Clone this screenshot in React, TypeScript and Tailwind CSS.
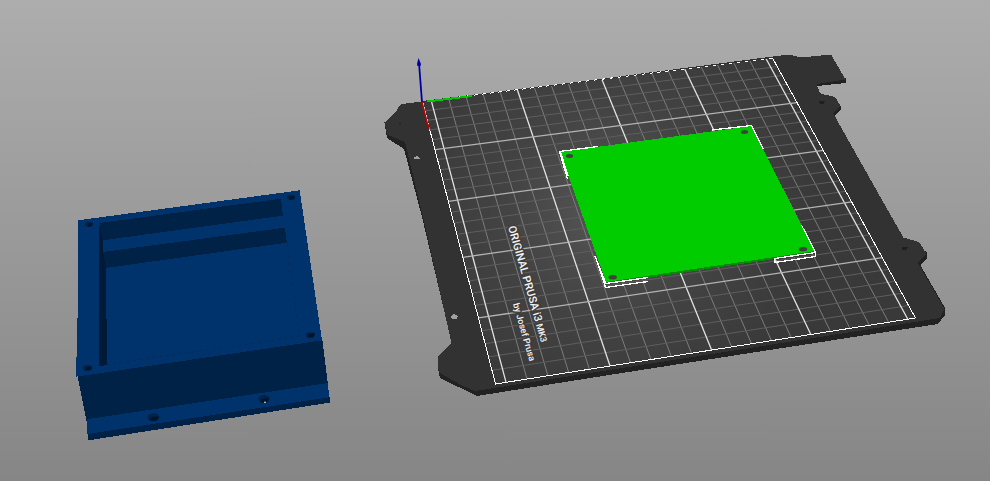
import React from 'react';

type Point = [number, number];

// Screen corners of the printable area, clockwise from the bed origin.
const corners: Point[] = [
  [422.5, 101.5],
  [772.5, 58],
  [915.5, 318],
  [495.5, 384],
];

const BED_DEPTH = 250;
const BED_WIDTH = 209;

// Projects bed millimetres to screen units; u runs right, v runs to the front.
function project(across: number, down: number): Point {
  const u = across / BED_WIDTH;
  const v = down / BED_DEPTH;
  const [[x0, y0], [x1, y1], [x2, y2], [x3, y3]] = corners;
  const dx1 = x1 - x2;
  const dx2 = x3 - x2;
  const dx3 = x0 - x1 + x2 - x3;
  const dy1 = y1 - y2;
  const dy2 = y3 - y2;
  const dy3 = y0 - y1 + y2 - y3;
  const det = dx1 * dy2 - dx2 * dy1;
  const g = (dx3 * dy2 - dx2 * dy3) / det;
  const h = (dx1 * dy3 - dx3 * dy1) / det;
  const w = g * u + h * v + 1;
  return [
    ((x1 - x0 + g * x1) * u + (x3 - x0 + h * x3) * v + x0) / w,
    ((y1 - y0 + g * y1) * u + (y3 - y0 + h * y3) * v + y0) / w,
  ];
}

function Grid() {
  const minor: React.ReactNode[] = [];
  const major: React.ReactNode[] = [];
  const add = (key: string, a: Point, b: Point, isMajor: boolean, bright: boolean) => {
    (isMajor ? major : minor).push(
      <line
        key={key}
        x1={a[0]}
        y1={a[1]}
        x2={b[0]}
        y2={b[1]}
        stroke={isMajor ? (bright ? '#e2e2e2' : '#b4b4b4') : bright ? '#7c7c7c' : '#5e5e5e'}
        strokeWidth={isMajor ? 1.3 : 1}
      />,
    );
  };
  for (let y = 5; y <= 205; y += 10) {
    add(`y${y}`, project(y, 0), project(y, BED_DEPTH), (y - 5) % 50 === 0, true);
  }
  for (let x = 10; x < BED_DEPTH; x += 10) {
    add(`x${x}`, project(0, x), project(BED_WIDTH, x), x % 50 === 0, false);
  }
  return (
    <g>
      {minor}
      {major}
    </g>
  );
}

function PrintBed() {
  return (
    <g>
      <g shapeRendering="crispEdges">
        {/* underside */}
        <path
          fill="#222222"
          d="M384.500 123 L387 138 L404 149 L422 217 L452 344 L438 368 L440 378 L477 396 L590 378 L750 353 L938 324 L945 315 L945 308 L918 261 L920 266 L927 258 L927 252 L903 239 L882 202 L833 113 L834 116 L841 110 L841 106 L820 93 L817 86 L846 83 L846 78 L816 80 L430 101 Z"
        />
        {/* upper face */}
        <path
          fill="#323232"
          d="M430 101 L422 101.500 L402 104 L398 107 L397 111 L384.500 122.500 L387 134.500 L405 142 L423 217 L451.500 343 L437.500 357 L438 369 L440 373 L461 385 L475 391 L590 373 L750 348 L940 318 L944.500 309 L918 263 L926.500 254 L920 243 L915.500 241 L903.500 237.500 L882 200 L833 113 L840.500 106 L835 97 L820 93.500 L816.500 84 L845.500 79.500 L831 54.500 L801 57.500 L795 56 L789 54.500 L773 56.500 Z"
        />
        <path fill="#a0a0a0" d="M414 157 l3 -1 l3 2 v1 h-6 Z M451 316 l3 -2 l4 2 l-1 3 h-5 Z" />
        <path
          fill="#202020"
          d="M819 101 h6 l-1 3 h-4 Z M902 247 h6 l-1 3 h-5 Z M399 123 h2 v1 h-2 Z"
        />
      </g>
      <polygon points={corners.map((p) => p.join(',')).join(' ')} fill="url(#bed-shade)" />
      <Grid />
      <polygon
        points={corners.map((p) => p.join(',')).join(' ')}
        fill="none"
        stroke="#ffffff"
        strokeWidth="1"
        shapeRendering="crispEdges"
      />
      <path d="M422.500 101.500 L773 57.500" stroke="#333333" strokeDasharray="5 3" shapeRendering="crispEdges" />
      <g
        className="font-[Roboto,'Liberation_Sans',sans-serif] font-medium"
        fill="#f4f4f4"
        stroke="#3e3e3e"
        strokeWidth="3"
        paintOrder="stroke"
        strokeLinejoin="round"
      >
        <text className="text-[11px]" transform="translate(508 227) rotate(74)">
          ORIGINAL PRUSA i3 <tspan className="text-[9px]">MK3</tspan>
        </text>
        <text className="text-[9px]" transform="translate(513 304) rotate(74)">
          by Josef Prusa
        </text>
      </g>
    </g>
  );
}

function Axes() {
  return (
    <g>
      <path d="M427 101.500 L472 96" stroke="#00c800" strokeWidth="2" shapeRendering="crispEdges" />
      <path d="M422 102 L428 126" stroke="#c00000" strokeWidth="1.500" />
      <path d="M425.500 125 L430 124 L429.500 130 Z" fill="#b00000" />
      <path d="M422 102 L419 63" stroke="#0000a0" strokeWidth="1.800" />
      <path d="M418.500 58 L421 64 L420.500 66 L417.500 66 L417 64 Z" fill="#0000a8" />
    </g>
  );
}

function GreenPlate() {
  return (
    <g>
      <g shapeRendering="crispEdges">
        <path fill="#078a07" d="M560 153 L607 284 L815 253 L815 250 Z" />
        <path fill="#00cc00" d="M560 152 L751 126 L815 251 L606 282 Z" />
        <g fill="none" stroke="#ffffff" strokeWidth="1.300">
          <path d="M598 146.500 L559.500 151.500 L567.500 179" />
          <path d="M560.500 152 L568 176" />
          <path d="M712 130 L751.500 125.500 L763.500 149" />
          <path d="M595 256 L606 283.500 L648 277.500" />
          <path d="M596 258 L605.500 287.500 L648 281.500" />
          <path d="M801.500 225 L815.500 252.500 L774.500 258.500 L775 262.500 L815.500 256.500 L815.500 252" />
        </g>
      </g>
      <g fill="#404040">
        <ellipse cx="569.500" cy="156" rx="3.700" ry="1.900" />
        <ellipse cx="744.500" cy="132" rx="3.700" ry="1.900" />
        <ellipse cx="803" cy="249.300" rx="4.200" ry="2.200" />
        <ellipse cx="612.700" cy="277.300" rx="4.200" ry="2.300" />
      </g>
      <path d="M566 155 l3 -1 M741 131 l4 -1 M799 249 l4 -2 M609 277 l4 -2" stroke="#087b08" />
    </g>
  );
}

function BlueBox() {
  // Drawn at three times its on-screen size for finer coordinates.
  return (
    <g transform="translate(60 180) scale(0.333333)">
      <g shapeRendering="crispEdges">
        <path fill="#002247" d="M51 580 L786 471 L804 613 L80 724 Z" />
        <path fill="#002247" d="M80 740 L809 651 L809 668 L85 781 Z" />
        <path fill="#00336c" d="M54 121 L719 31 L786 481 L49 590 L49 530 L52 528 Z" />
        <path fill="#00336c" d="M80 718 L804 609 L807 652 L82 762 Z" />
        <path fill="#002247" d="M118 129 L663 56 L669 107 L128 181 Z" />
        <path fill="#002247" d="M128 216 L674 143 L681 188 L138 264 Z" />
        <path fill="#001a38" d="M117 131 L130 181 L130 218 L138 264 L141 555 L117 559 Z" />
        <path fill="none" stroke="#002b5b" strokeWidth="3" strokeDasharray="9 11" d="M681 188 L718 469 L141 554" />
      </g>
      <g fill="#00234a">
        <ellipse cx="87" cy="133" rx="12" ry="8" />
        <ellipse cx="693" cy="52" rx="12" ry="8" />
        <ellipse cx="751" cy="465" rx="14" ry="9" />
        <ellipse cx="83" cy="564" rx="14" ry="9" />
        <ellipse cx="280" cy="712" rx="18" ry="12" />
        <ellipse cx="612" cy="657" rx="17" ry="12" />
      </g>
      <g fill="#00162f">
        <path d="M83 141 L85 131 L98 128 L95 139 Z M689 59 L690 49 L704 48 L702 58 Z M743 473 L746 463 L764 460 L761 470 Z M75 572 L79 561 L96 558 L93 568 Z" />
        <path d="M269 722 L274 711 L297 709 L290 722 Z M602 668 L604 657 L627 654 L622 667 Z" />
      </g>
      <path fill="#b0b8b4" d="M612 665 h6 v4 h-6 Z" />
    </g>
  );
}

export default function App() {
  return (
    <main className="w-full bg-white pr-[5px] pb-1">
      <svg
        className="block h-auto w-full bg-linear-to-b from-[#adadad] to-[#868686]"
        viewBox="0 0 990 481"
        role="img"
        aria-label="3D print bed with two models"
      >
        <defs>
          <radialGradient id="bed-shade" gradientUnits="userSpaceOnUse" cx="610" cy="210" r="210">
            <stop offset="0" stopColor="#565656" />
            <stop offset="0.500" stopColor="#434343" />
            <stop offset="1" stopColor="#393939" />
          </radialGradient>
        </defs>
        <PrintBed />
        <Axes />
        <GreenPlate />
        <BlueBox />
      </svg>
    </main>
  );
}
